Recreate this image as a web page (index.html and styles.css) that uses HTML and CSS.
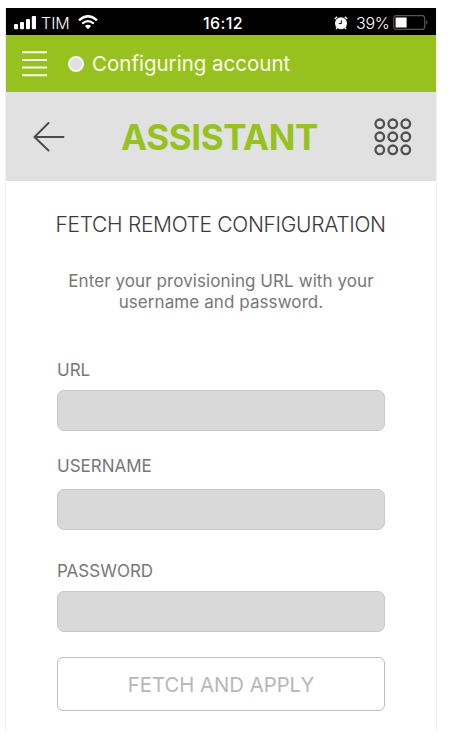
FILE: index.html
```html
<!DOCTYPE html>
<html lang="en">
<head>
<meta charset="utf-8">
<title>Assistant</title>
<link rel="stylesheet" href="styles.css">
</head>
<body>
<main class="phone">
  <header class="status">
    <svg class="signal" width="22" height="14" viewBox="0 0 22 14" fill="#fff"><rect x="0" y="8" width="4" height="5.3" rx="1"/><rect x="6" y="6" width="4" height="7.3" rx="1"/><rect x="12" y="3" width="4" height="10.3" rx="1"/><rect x="17.8" y="0" width="4.2" height="13.3" rx="1"/></svg>
    <span class="carrier">TIM</span>
    <svg class="wifi" width="20" height="15" viewBox="0 0 20 15" fill="none" stroke="#fff" stroke-width="2.3"><path d="M1 5.3Q10-2.7 19 5.3M4.2 8.7Q10 3.6 15.8 8.7"/><path d="M6.8 11Q10 8.4 13.2 11L10 14.2Z" fill="#fff" stroke="none"/></svg>
    <time class="clock">16:12</time>
    <svg class="alarm" width="14" height="14" viewBox="0 0 14 14"><circle cx="7" cy="7.3" r="6" fill="#fff"/><path d="M.8 3 3.2.8M10.8.8l2.4 2.2M3.2 11.5 2 13M10.8 11.5 12 13" stroke="#fff" stroke-width="1.4"/><path d="M7.3 4.2v3.4H4.8" fill="none" stroke="#000" stroke-width="1"/></svg>
    <span class="percent">39%</span>
    <svg class="battery" width="36" height="15" viewBox="0 0 36 15"><rect x=".7" y=".7" width="31" height="13.6" rx="2.5" fill="none" stroke="#57575a" stroke-width="1.2"/><rect x="2.6" y="2.5" width="11" height="10" fill="#fff"/><path d="M33.4 5q2 2.5 0 5z" fill="#77777a"/></svg>
  </header>
  <div class="account">
    <svg class="menu" width="25" height="26" viewBox="0 0 25 26" stroke="#fbffe9" stroke-width="2.1"><path d="M0 1.3h25M0 9h25M0 16.5h25M0 24.3h25"/></svg>
    <span class="dot"></span>
    <span class="account-text">Configuring account</span>
  </div>
  <div class="titlebar">
    <svg class="back" width="32" height="30" viewBox="0 0 32 30" fill="none" stroke="#4b4b4b" stroke-width="2" stroke-linecap="round" stroke-linejoin="round"><path d="M30.5 15H1.5M15.5 1 1.5 15l14 13.5"/></svg>
    <h1 class="title">ASSISTANT</h1>
    <svg class="dialpad" width="38" height="38" viewBox="0 0 38 38" fill="none" stroke="#505050" stroke-width="2.3"><circle cx="5.8" cy="5.8" r="4.3"/><circle cx="18.8" cy="5.8" r="4.3"/><circle cx="31.8" cy="5.8" r="4.3"/><circle cx="5.8" cy="18.8" r="4.3"/><circle cx="18.8" cy="18.8" r="4.3"/><circle cx="31.8" cy="18.8" r="4.3"/><circle cx="5.8" cy="31.8" r="4.3"/><circle cx="18.8" cy="31.8" r="4.3"/><circle cx="31.8" cy="31.8" r="4.3"/></svg>
  </div>
  <form class="form">
    <h2 class="heading">FETCH REMOTE CONFIGURATION</h2>
    <p class="hint">Enter your provisioning URL with your<br>username and password.</p>
    <label class="label url" for="url">URL</label>
    <input class="field" id="url">
    <label class="label user" for="user">USERNAME</label>
    <input class="field" id="user">
    <label class="label pass" for="pass">PASSWORD</label>
    <input class="field" id="pass" type="password">
    <button class="apply" type="button">FETCH AND APPLY</button>
  </form>
</main>
</body>
</html>
```
FILE: styles.css
```css
* { box-sizing: border-box; }
body { margin: 0; background: #fff; font-family: Inter, "Liberation Sans", sans-serif; }
.phone { width: 432px; height: 724px; margin: 8px 0 0 5px; border: solid #eef0f4; border-width: 0 1px; }
.status { display: flex; align-items: center; height: 27px; background: #000; color: #fff; padding: 2px 0 0 8px; }
.status svg, .menu, .back, .dialpad { flex: none; display: block; }
.carrier { margin-left: 5px; width: 28px; font-size: 16px; font-weight: 300; }
.wifi { margin-left: 9px; }
.clock { margin-left: 105px; width: 43px; font-size: 16px; font-weight: 500; letter-spacing: 0.4px; }
.alarm { margin-left: 88px; }
.percent { margin-left: 8px; width: 33px; font-size: 16px; font-weight: 300; letter-spacing: -0.3px; }
.battery { margin-left: 4px; }
.account { display: flex; align-items: center; height: 57px; background: #97c11f; color: #fbffe9; padding-left: 16px; }
.dot { width: 16px; height: 16px; margin-left: 21px; border-radius: 50%; background: #e0e0e3; border: 2px solid #f4f6ee; }
.account-text { margin-left: 8px; font-size: 20.5px; white-space: nowrap; }
.titlebar { display: flex; align-items: center; height: 89px; background: #e1e1e1; padding-left: 27px; }
.title { margin: 0 0 0 56px; width: 198px; font-size: 35px; line-height: 40px; font-weight: 700; letter-spacing: -0.4px; color: #97c11f; white-space: nowrap; }
.dialpad { margin-left: 55px; }
.form { padding: 30px 51px 0; }
.heading { margin: 0 0 0 -1.5px; font-size: 21px; line-height: 28px; font-weight: 300; letter-spacing: -0.32px; color: #3a3a3a; white-space: nowrap; }
.hint { margin: 32px -10px 0; font-size: 17px; line-height: 21px; letter-spacing: 0.08px; color: #777; text-align: center; white-space: nowrap; }
.label { display: block; font-size: 17px; line-height: 20px; color: #777; }
.url { margin-top: 47px; }
.user { margin-top: 25px; }
.pass { margin-top: 31px; }
.field { display: block; width: 328px; height: 41px; margin-top: 10px; border: 1px solid #c8c8c8; border-radius: 7px; background: #d9d9d9; padding: 0 10px; font: 17px Inter, sans-serif; }
.user + .field { margin-top: 13px; }
.apply { display: block; width: 328px; height: 54px; margin-top: 25px; border: 1px solid #bfbfbf; border-radius: 6px; background: #fff; color: #b7b7b7; font: 400 20.3px Inter, sans-serif; padding: 0; }
```
